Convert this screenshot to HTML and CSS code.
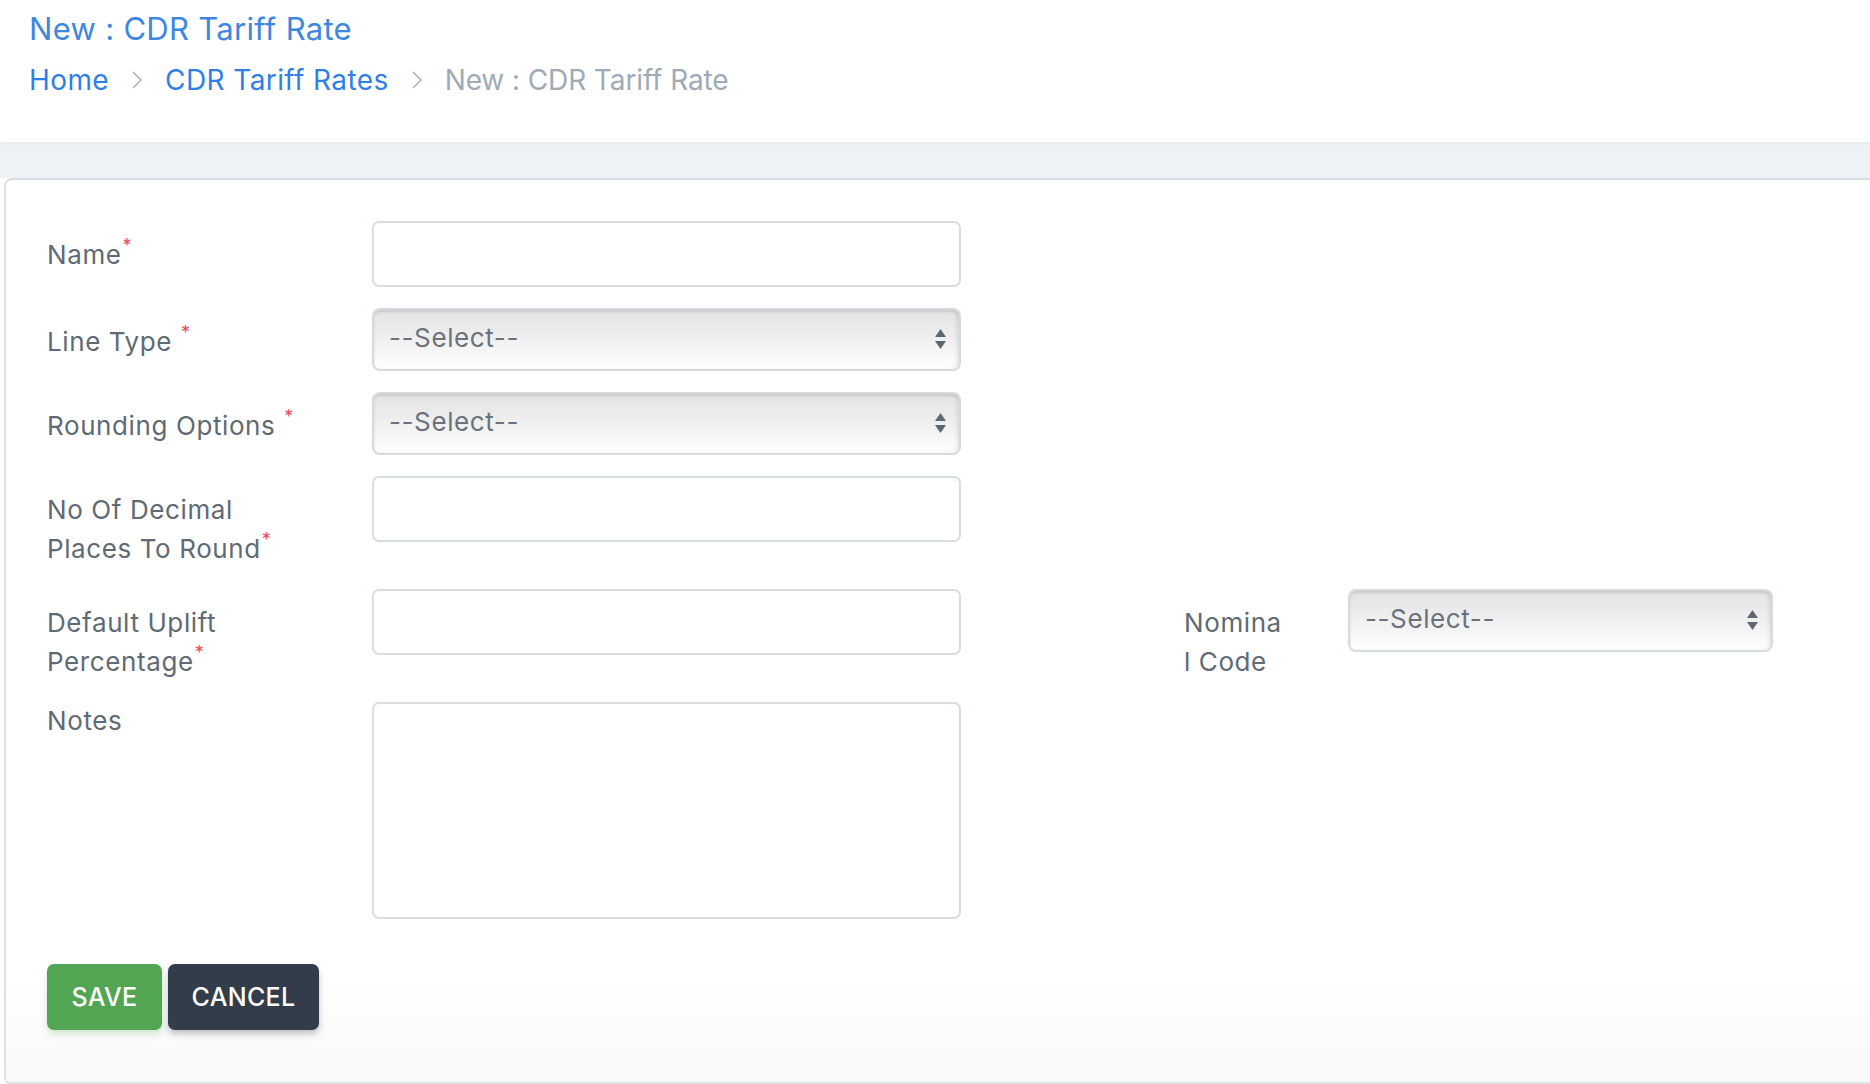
FILE: index.html
```html
<!DOCTYPE html>
<html lang="en">
<head>
<meta charset="utf-8">
<title>New : CDR Tariff Rate</title>
<link rel="stylesheet" href="styles.css">
</head>
<body>
<div class="page">
  <header class="page-header">
    <h1 class="page-title">New : CDR Tariff Rate</h1>
    <nav class="breadcrumb">
      <a class="crumb-link" href="#">Home</a>
      <svg class="crumb-sep" width="12" height="20" viewBox="0 0 12 20"><polyline points="2,2 10,10 2,18" fill="none" stroke="#a9b3bc" stroke-width="1.6"/></svg>
      <a class="crumb-link" href="#">CDR Tariff Rates</a>
      <svg class="crumb-sep" width="12" height="20" viewBox="0 0 12 20"><polyline points="2,2 10,10 2,18" fill="none" stroke="#a9b3bc" stroke-width="1.6"/></svg>
      <span class="crumb-current">New : CDR Tariff Rate</span>
    </nav>
  </header>
  <div class="band"></div>
  <main class="card">
    <form class="form">
      <div class="form-row">
        <label class="label">Name<sup class="req">*</sup></label>
        <input class="input" type="text">
      </div>
      <div class="form-row">
        <label class="label">Line Type <sup class="req">*</sup></label>
        <div class="select-wrap">
          <select class="select"><option>--Select--</option></select>
          <svg class="select-arrows" width="11" height="20" viewBox="0 0 11 20"><polygon points="0,8 5.5,0 11,8" fill="#5d6872"/><polygon points="0,12 11,12 5.5,20" fill="#5d6872"/></svg>
        </div>
      </div>
      <div class="form-row">
        <label class="label">Rounding Options <sup class="req">*</sup></label>
        <div class="select-wrap">
          <select class="select"><option>--Select--</option></select>
          <svg class="select-arrows" width="11" height="20" viewBox="0 0 11 20"><polygon points="0,8 5.5,0 11,8" fill="#5d6872"/><polygon points="0,12 11,12 5.5,20" fill="#5d6872"/></svg>
        </div>
      </div>
      <div class="form-row">
        <label class="label">No Of Decimal<br>Places To Round<sup class="req">*</sup></label>
        <input class="input" type="text">
      </div>
      <div class="form-row">
        <label class="label">Default Uplift<br>Percentage<sup class="req">*</sup></label>
        <input class="input" type="text">
        <span class="spacer"></span>
        <label class="label label-narrow">Nominal Code</label>
        <div class="select-wrap">
          <select class="select"><option>--Select--</option></select>
          <svg class="select-arrows" width="11" height="20" viewBox="0 0 11 20"><polygon points="0,8 5.5,0 11,8" fill="#5d6872"/><polygon points="0,12 11,12 5.5,20" fill="#5d6872"/></svg>
        </div>
      </div>
      <div class="form-row">
        <label class="label label-top">Notes</label>
        <textarea class="textarea"></textarea>
      </div>
      <div class="actions">
        <button type="button" class="btn btn-save">SAVE</button>
        <button type="button" class="btn btn-cancel">CANCEL</button>
      </div>
    </form>
  </main>
</div>
</body>
</html>
```

FILE: styles.css
```css
* { box-sizing: border-box; }

html, body {
  margin: 0;
  padding: 0;
  height: 100%;
}

body {
  font-family: Inter, "Open Sans", "Liberation Sans", sans-serif;
  background: #ffffff;
  color: #646e78;
  overflow: hidden;
}

.page {
  display: flex;
  flex-direction: column;
  height: 100vh;
}

.page-header {
  height: 142px;
  padding: 10px 0 0 29px;
  background: #ffffff;
  box-shadow: 0 1px 4px rgba(0, 0, 0, 0.06);
  position: relative;
  z-index: 1;
}

.page-title {
  margin: 0;
  font-size: 31px;
  line-height: 37px;
  font-weight: 400;
  color: #3d87e0;
  letter-spacing: 0.3px;
}

.breadcrumb {
  margin-top: 16px;
  display: flex;
  align-items: center;
  font-size: 28px;
  line-height: 34px;
}

.crumb-link {
  color: #2f7fe8;
  text-decoration: none;
  letter-spacing: 0.4px;
}

.crumb-sep {
  margin: 0 22px 0 22px;
}

.crumb-current {
  color: #9eabb6;
  letter-spacing: -0.1px;
}

.band {
  height: 36px;
  background: #eef2f6;
  flex: none;
}

.card {
  flex: 1;
  margin-left: 4px;
  border-top: 2px solid #d8dee3;
  border-left: 2px solid #dde2e6;
  border-bottom: 2px solid #dde2e6;
  border-radius: 8px 0 0 6px;
  background: linear-gradient(to bottom, #ffffff 0%, #ffffff 88%, #f8f8f9 100%);
  padding: 41px 0 0 41px;
}

.form-row {
  display: grid;
  grid-template-columns: 325px 589px 223px 164px 425px;
  align-items: start;
  margin-bottom: 21px;
}

.label {
  display: block;
  padding-top: 15px;
  font-size: 26px;
  line-height: 38.5px;
  letter-spacing: 0.6px;
  color: #606a74;
}

.label-top {
  padding-top: 0;
}

.label-narrow {
  width: 102px;
  word-break: break-all;
}

.req {
  color: #e84a5f;
  font-size: 18px;
  line-height: 0;
  vertical-align: 12px;
  margin-left: 1px;
}

.input {
  display: block;
  width: 589px;
  height: 66px;
  border: 2px solid #d8dde2;
  border-radius: 7px;
  background: #ffffff;
  font-family: inherit;
  font-size: 25px;
  padding: 0 16px;
  outline: none;
}

.textarea {
  display: block;
  width: 589px;
  height: 217px;
  border: 2px solid #d8dde2;
  border-radius: 7px;
  background: #ffffff;
  resize: none;
  outline: none;
  font-family: inherit;
  font-size: 25px;
}

.select-wrap {
  position: relative;
  height: 63px;
}

.select {
  -webkit-appearance: none;
  appearance: none;
  display: block;
  width: 100%;
  height: 63px;
  border: 2px solid #d6dbdf;
  border-radius: 8px;
  background: linear-gradient(to bottom, #e3e3e3 0%, #ececec 35%, #f7f7f7 75%, #ffffff 100%);
  box-shadow: inset 0 2px 3px rgba(0, 0, 0, 0.10), inset -3px 0 4px rgba(0, 0, 0, 0.06);
  font-family: inherit;
  font-size: 26px;
  letter-spacing: 0.6px;
  color: #6a737c;
  padding: 0 40px 4px 15px;
  outline: none;
}

.select-arrows {
  position: absolute;
  right: 15px;
  top: 21px;
  pointer-events: none;
}

.actions {
  display: flex;
  gap: 6px;
  margin-top: 45px;
}

.btn {
  height: 66px;
  border: none;
  border-radius: 7px;
  color: #ffffff;
  font-family: inherit;
  font-size: 25px;
  font-weight: 500;
  letter-spacing: 0.3px;
  padding: 0;
  cursor: pointer;
}

.btn-save {
  width: 115px;
  background: #52a552;
  box-shadow: 0 4px 6px rgba(82, 165, 82, 0.25);
}

.btn-cancel {
  width: 151px;
  background: #333d4a;
  box-shadow: 0 4px 6px rgba(51, 61, 74, 0.3);
}
```
